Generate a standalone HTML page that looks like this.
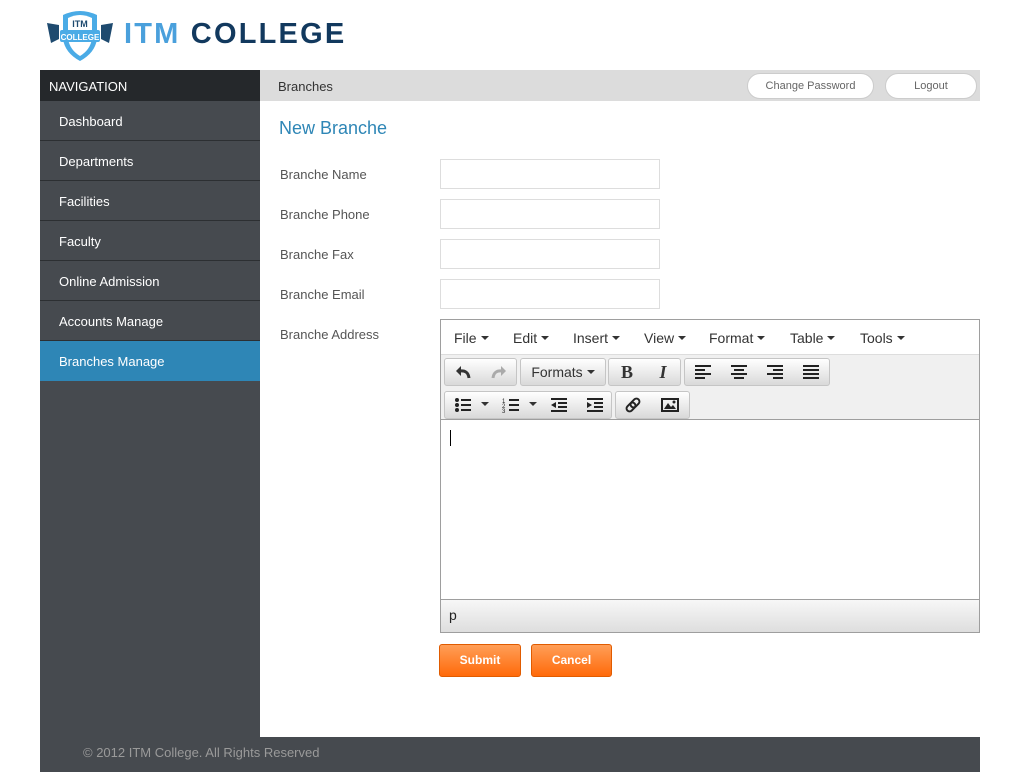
<!DOCTYPE html>
<html><head><style>
*{box-sizing:border-box;margin:0;padding:0}
body{width:1020px;height:772px;background:#fff;font-family:"Liberation Sans",sans-serif;position:relative;overflow:hidden}
.abs{position:absolute}
.side{left:40px;top:101px;width:220px;height:636px;background:#464a4f}
.nav{left:40px;top:70px;width:220px;height:31px;background:#25282b;color:#fff;font-size:13px;padding:9px 9px}
.item{position:absolute;left:40px;width:220px;height:40px;border-bottom:1px solid #2c2f32;color:#fff;font-size:13px;padding:13px 19px}
.top{left:260px;top:70px;width:720px;height:31px;background:#dcdcdc;font-size:13px;color:#333;padding:9px 18px}
.pill{position:absolute;top:73px;height:26px;border-radius:13px;background:#fff;border:1px solid #ccc;font-size:11px;color:#666;text-align:center;line-height:25px}
.lbl{position:absolute;left:280px;font-size:13px;color:#555}
.inp{position:absolute;left:440px;width:220px;height:30px;border:1px solid #ddd}
.ed{left:440px;top:319px;width:540px;height:314px;border:1px solid #9e9e9e}
.mb{position:absolute;top:10px;font-size:14px;color:#333}
.car{display:inline-block;border-left:4px solid transparent;border-right:4px solid transparent;border-top:4px solid #333;vertical-align:middle;margin-left:4px;margin-top:-2px}
.grp{position:absolute;height:28px;border:1px solid #c5c5c5;border-radius:3px;background:linear-gradient(#fff,#d9d9d9)}
.b{position:absolute;top:0;height:26px;text-align:center;line-height:26px;font-size:14px;color:#333}
.b svg{position:absolute;left:9px;top:5px}
.btn{position:absolute;top:644px;height:33px;border:1px solid #e05b00;border-radius:3px;background:linear-gradient(#ff9e57,#ff6a0a);color:#fff;font-weight:bold;font-size:12px;text-align:center;line-height:31px}
</style></head><body>
<svg class="abs" style="left:45px;top:9px" width="70" height="55" viewBox="0 0 70 55">
<path d="M2 14 L14 16 L14 30 L6 34 Z" fill="#1e4a6f"/><path d="M68 14 L56 16 L56 30 L64 34 Z" fill="#1e4a6f"/>
<path d="M18 6 Q35 -2 52 6 L52 30 Q50 44 35 52 Q20 44 18 30 Z" fill="#4aabe6"/>
<path d="M23 9 Q35 3 47 9 L47 30 Q45 41 35 47 Q25 41 23 30Z" fill="#fff"/>
<rect x="15" y="21" width="40" height="12" rx="2" fill="#4aabe6"/>
<text x="35" y="18" font-size="9" font-weight="bold" fill="#1e4a6f" text-anchor="middle" font-family="Liberation Sans">ITM</text>
<text x="35" y="31" font-size="8" font-weight="bold" fill="#fff" text-anchor="middle" font-family="Liberation Sans">COLLEGE</text>
</svg>
<div class="abs" style="left:124px;top:18px;font-size:29px;font-weight:bold;letter-spacing:2.2px;white-space:nowrap"><span style="color:#4aa0dc">ITM</span> <span style="color:#12395e">COLLEGE</span></div>
<div class="abs side"></div>
<div class="abs nav">NAVIGATION</div>
<div class="item" style="top:101px">Dashboard</div>
<div class="item" style="top:141px">Departments</div>
<div class="item" style="top:181px">Facilities</div>
<div class="item" style="top:221px">Faculty</div>
<div class="item" style="top:261px">Online Admission</div>
<div class="item" style="top:301px">Accounts Manage</div>
<div class="item" style="top:341px;background:#2e86b6;border:none">Branches Manage</div>
<div class="abs top">Branches</div>
<div class="pill" style="left:747px;width:127px">Change Password</div>
<div class="pill" style="left:885px;width:92px">Logout</div>
<div class="abs" style="left:279px;top:118px;font-size:18px;color:#2e86b6">New Branche</div>
<div class="lbl" style="top:167px">Branche Name</div><div class="inp" style="top:159px"></div>
<div class="lbl" style="top:207px">Branche Phone</div><div class="inp" style="top:199px"></div>
<div class="lbl" style="top:247px">Branche Fax</div><div class="inp" style="top:239px"></div>
<div class="lbl" style="top:287px">Branche Email</div><div class="inp" style="top:279px"></div>
<div class="lbl" style="top:327px">Branche Address</div>
<div class="abs ed">
<div style="position:absolute;left:0;top:0;width:538px;height:35px;background:#fff;border-bottom:1px solid #ddd"></div>
<div class="mb" style="left:13px">File<span class="car"></span></div>
<div class="mb" style="left:72px">Edit<span class="car"></span></div>
<div class="mb" style="left:132px">Insert<span class="car"></span></div>
<div class="mb" style="left:203px">View<span class="car"></span></div>
<div class="mb" style="left:268px">Format<span class="car"></span></div>
<div class="mb" style="left:349px">Table<span class="car"></span></div>
<div class="mb" style="left:419px">Tools<span class="car"></span></div>
<div style="position:absolute;left:0;top:35px;width:538px;height:65px;background:#f0f0f0;border-bottom:1px solid #9e9e9e"></div>
<div class="grp" style="left:3px;top:38px;width:73px">
<div class="b" style="left:0;width:36px"><svg width="18" height="16" viewBox="0 0 18 16"><path d="M7 2 L2 7 L7 12 Z" fill="#333"/><path d="M6 7 Q14 6 15 14" stroke="#333" stroke-width="3" fill="none"/></svg></div>
<div class="b" style="left:36px;width:36px"><svg width="18" height="16" viewBox="0 0 18 16"><path d="M11 2 L16 7 L11 12 Z" fill="#aaa"/><path d="M12 7 Q4 6 3 14" stroke="#aaa" stroke-width="3" fill="none"/></svg></div></div>
<div class="grp" style="left:79px;top:38px;width:86px"><div class="b" style="left:0;width:84px">Formats<span class="car"></span></div></div>
<div class="grp" style="left:167px;top:38px;width:73px"><div class="b" style="left:0;width:36px;font-weight:bold;font-family:'Liberation Serif';font-size:18px">B</div><div class="b" style="left:36px;width:36px;font-style:italic;font-weight:bold;font-family:'Liberation Serif';font-size:18px">I</div></div>
<div class="grp" style="left:243px;top:38px;width:146px">
<div class="b" style="left:0;width:36px"><svg width="18" height="16"><path d="M1 2h16M1 6h10M1 10h16M1 14h10" stroke="#222" stroke-width="2"/></svg></div>
<div class="b" style="left:36px;width:36px"><svg width="18" height="16"><path d="M1 2h16M4 6h10M1 10h16M4 14h10" stroke="#222" stroke-width="2"/></svg></div>
<div class="b" style="left:72px;width:36px"><svg width="18" height="16"><path d="M1 2h16M7 6h10M1 10h16M7 14h10" stroke="#222" stroke-width="2"/></svg></div>
<div class="b" style="left:108px;width:36px"><svg width="18" height="16"><path d="M1 2h16M1 6h16M1 10h16M1 14h16" stroke="#222" stroke-width="2"/></svg></div></div>
<div class="grp" style="left:3px;top:71px;width:168px">
<div class="b" style="left:0;width:48px"><svg width="18" height="16"><circle cx="3" cy="3" r="2" fill="#222"/><circle cx="3" cy="8" r="2" fill="#222"/><circle cx="3" cy="13" r="2" fill="#222"/><path d="M7 3h10M7 8h10M7 13h10" stroke="#222" stroke-width="2"/></svg><span class="car" style="position:absolute;left:32px;top:12px"></span></div>
<div class="b" style="left:48px;width:48px"><svg width="18" height="16"><text x="0" y="6" font-size="6" fill="#222">1</text><text x="0" y="11" font-size="6" fill="#222">2</text><text x="0" y="16" font-size="6" fill="#222">3</text><path d="M7 3h10M7 8h10M7 13h10" stroke="#222" stroke-width="2"/></svg><span class="car" style="position:absolute;left:32px;top:12px"></span></div>
<div class="b" style="left:96px;width:36px"><svg width="18" height="16"><path d="M1 2h16M8 6h9M8 10h9M1 14h16" stroke="#222" stroke-width="2"/><path d="M6 5L1 8L6 11Z" fill="#222"/></svg></div>
<div class="b" style="left:132px;width:36px"><svg width="18" height="16"><path d="M1 2h16M8 6h9M8 10h9M1 14h16" stroke="#222" stroke-width="2"/><path d="M1 5L6 8L1 11Z" fill="#222"/></svg></div></div>
<div class="grp" style="left:174px;top:71px;width:75px">
<div class="b" style="left:0;width:36px"><svg width="18" height="16"><rect x="7" y="1" width="6" height="10" rx="3" transform="rotate(45 10 6)" fill="none" stroke="#222" stroke-width="2"/><rect x="3" y="5" width="6" height="10" rx="3" transform="rotate(45 6 10)" fill="none" stroke="#222" stroke-width="2"/></svg></div>
<div class="b" style="left:36px;width:36px"><svg width="18" height="16"><rect x="1" y="2" width="16" height="12" fill="none" stroke="#222" stroke-width="2"/><path d="M3 12L7 6L10 10L12 8L15 12Z" fill="#222"/><circle cx="13" cy="5" r="1.5" fill="#222"/></svg></div></div>
<div style="position:absolute;left:9px;top:110px;width:1px;height:16px;background:#000"></div>
<div style="position:absolute;left:0;top:279px;width:538px;height:33px;border-top:1px solid #9e9e9e;background:linear-gradient(#f7f7f7,#dedede);font-size:14px;padding:7px 8px;color:#222">p</div>
</div>
<div class="btn" style="left:439px;width:82px">Submit</div>
<div class="btn" style="left:531px;width:81px">Cancel</div>
<div class="abs" style="left:40px;top:737px;width:940px;height:35px;background:#464a4f;color:#9a9a9a;font-size:13px;padding:8px 43px">© 2012 ITM College. All Rights Reserved</div>
</body></html>
